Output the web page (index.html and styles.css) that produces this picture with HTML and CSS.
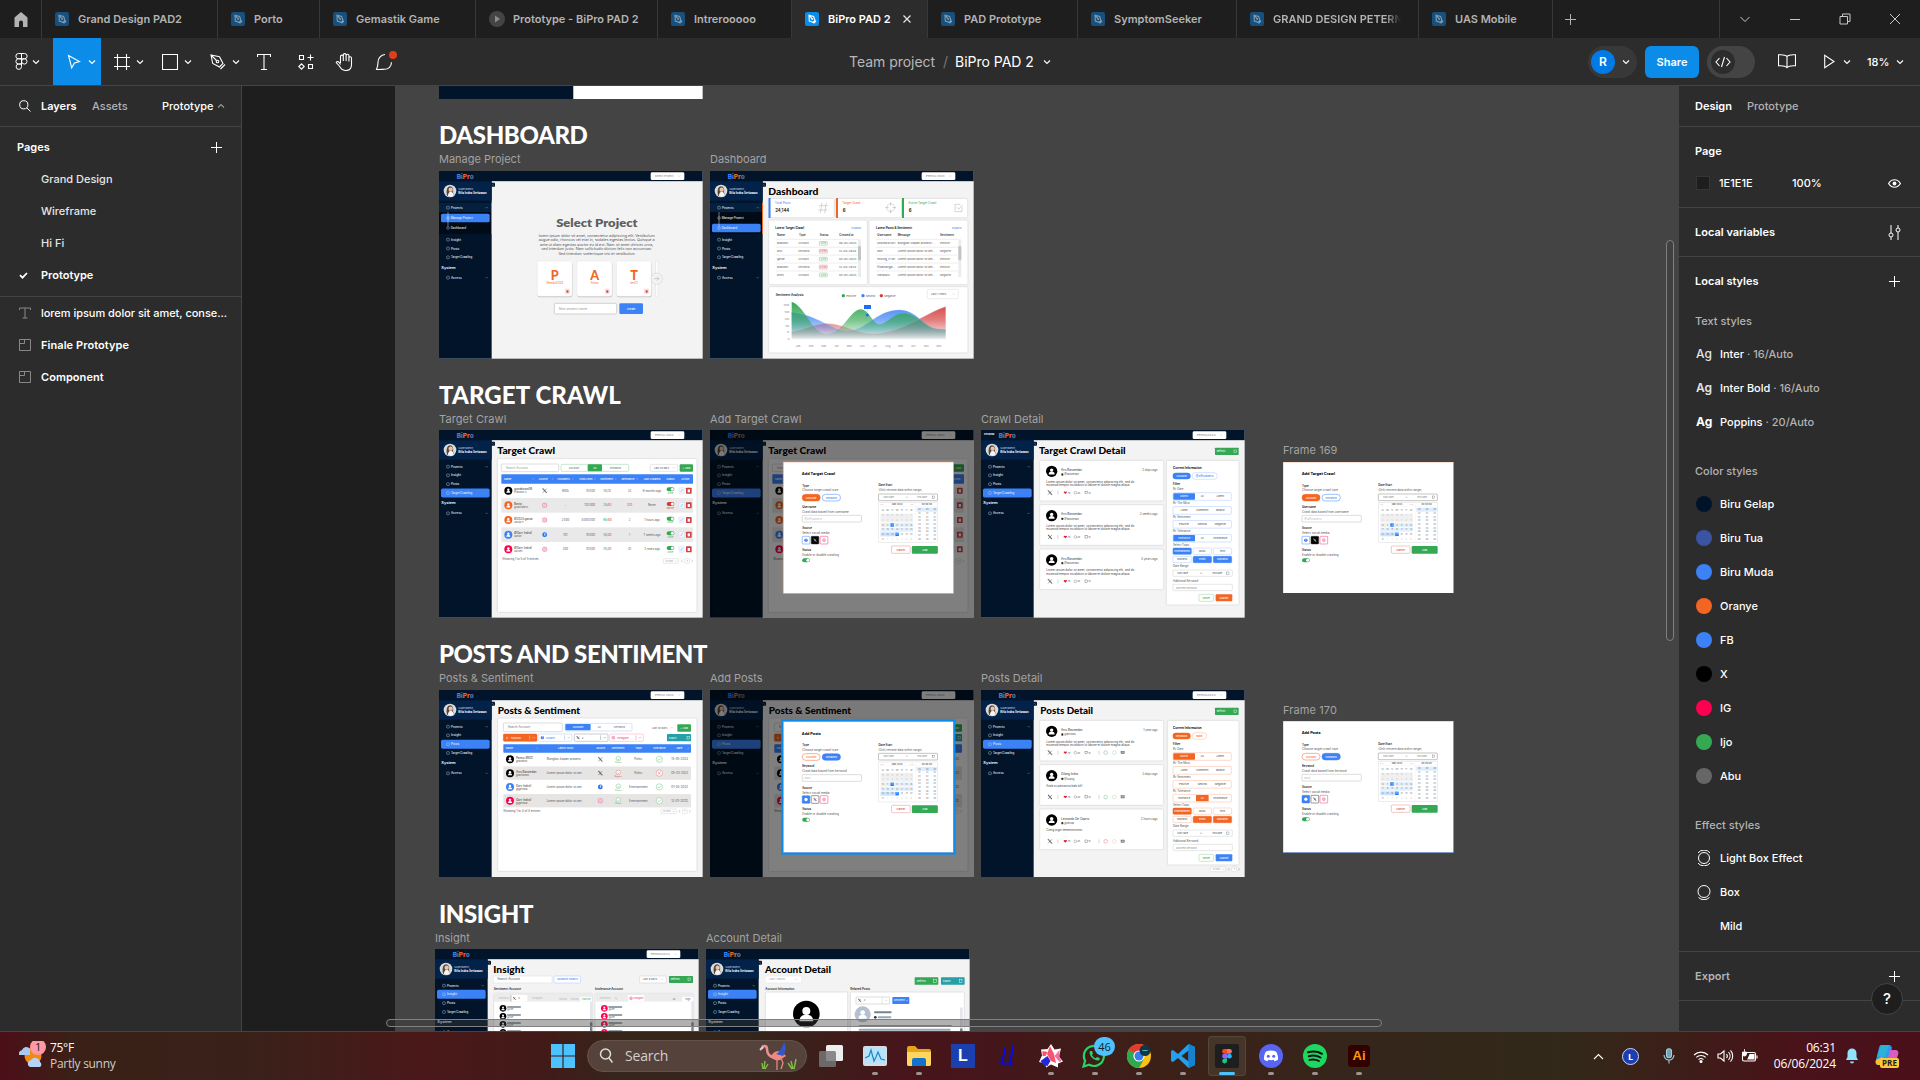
FILE: index.html
```html
<!DOCTYPE html>
<html lang="en">
<head>
<meta charset="utf-8">
<title>BiPro PAD 2</title>
<link rel="stylesheet" href="styles.css">
</head>
<body>
<svg class="defs" width="0" height="0" aria-hidden="true">
  <symbol id="i-file" viewBox="0 0 14 14"><rect width="14" height="14" rx="2" fill="var(--file)"/><path d="M4 3.2l4.6 1.3 1.4 3.8-1.9 2-3.8-1.2zM4 3.2l3 3.4M8.6 11.4l2.4-2.4" fill="none" stroke="var(--nib)" stroke-width="1.1"/><circle cx="7.2" cy="7" r=".9" fill="var(--nib)"/></symbol>
  <symbol id="i-chev" viewBox="0 0 8 8"><path d="M1 2.5l3 3 3-3" fill="none" stroke="currentColor" stroke-width="1.1"/></symbol>
  <symbol id="i-plus" viewBox="0 0 11 11"><path d="M5.500 0v11M0 5.500h11" fill="none" stroke="currentColor"/></symbol>
  <symbol id="i-frame" viewBox="0 0 12 12"><path d="M.5.5h11v11H.5zM.5 4.5h5v-4" fill="none" stroke="currentColor"/></symbol>
</svg>

<header class="tabs">
  <div class="tab home"><svg width="14" height="15" viewBox="0 0 14 15"><path d="M7 0l6.500 5.500V15H9v-4.500a2 2 0 0 0-4 0V15H.5V5.500z" fill="#b3b3b3"/></svg></div>
  <div class="tab w176"><svg class="ic"><use href="#i-file"/></svg><span>Grand Design PAD2</span></div>
  <div class="tab w102"><svg class="ic"><use href="#i-file"/></svg><span>Porto</span></div>
  <div class="tab w156"><svg class="ic"><use href="#i-file"/></svg><span>Gemastik Game</span></div>
  <div class="tab w182"><svg class="play" viewBox="0 0 16 16"><circle cx="8" cy="8" r="8" fill="#444"/><path d="M6 4.500v7l5-3.500z" fill="#8c8c8c"/></svg><span>Prototype - BiPro PAD 2</span></div>
  <div class="tab w134"><svg class="ic"><use href="#i-file"/></svg><span>Intrerooooo</span></div>
  <div class="tab w136 active"><svg class="ic"><use href="#i-file"/></svg><span>BiPro PAD 2</span><svg class="close" viewBox="0 0 8 8"><path d="M.5.500l7 7M7.500.500l-7 7" stroke="#e6e6e6" stroke-width="1.200"/></svg></div>
  <div class="tab w150"><svg class="ic"><use href="#i-file"/></svg><span>PAD Prototype</span></div>
  <div class="tab w159"><svg class="ic"><use href="#i-file"/></svg><span>SymptomSeeker</span></div>
  <div class="tab w182"><svg class="ic"><use href="#i-file"/></svg><span class="fade">GRAND DESIGN PETERN</span></div>
  <div class="tab w134"><svg class="ic"><use href="#i-file"/></svg><span>UAS Mobile</span></div>
  <div class="tab new"><svg width="11" height="11"><use href="#i-plus"/></svg></div>
  <div class="win">
    <svg viewBox="0 0 12 12"><path d="M1.500 4L6 8.500 10.500 4" /></svg>
    <svg viewBox="0 0 12 12"><path d="M1 6.500h10"/></svg>
    <svg viewBox="0 0 12 12"><path d="M1 3.500h7.500V11H1zM3.500 3.500V1H11v7.500H8.500"/></svg>
    <svg viewBox="0 0 12 12"><path d="M1 1l10 10M11 1L1 11"/></svg>
  </div>
</header>

<div class="toolbar">
  <div class="tools">
    <button class="tool t1"><svg width="13" height="17" viewBox="0 0 13 17"><path d="M6.500.5H3.500a2.600 2.600 0 0 0 0 5.300h3zM6.500.5h3a2.600 2.600 0 0 1 0 5.300h-3zM6.500 5.800H3.500a2.600 2.600 0 0 0 0 5.200h3zM6.500 11H3.500a2.700 2.700 0 1 0 3 2.700z"/><circle cx="9.300" cy="8.400" r="2.700"/></svg><svg class="cv"><use href="#i-chev"/></svg></button>
    <button class="tool sel"><svg width="14" height="16" viewBox="0 0 14 16"><path d="M1.500 1.500l11 6-5 1.500-2.800 4.800z"/></svg><svg class="cv"><use href="#i-chev"/></svg></button>
    <button class="tool"><svg width="16" height="16" viewBox="0 0 16 16"><path d="M3.500 0v16M12.500 0v16M0 3.500h16M0 12.500h16"/></svg><svg class="cv"><use href="#i-chev"/></svg></button>
    <button class="tool"><svg width="16" height="16" viewBox="0 0 16 16"><path d="M.5.5h15v15H.5z"/></svg><svg class="cv"><use href="#i-chev"/></svg></button>
    <button class="tool"><svg width="16" height="16" viewBox="0 0 16 16"><path d="M1 1l8.500 1.700 3.500 6.800-3.500 3.500L2.700 9.500zM1 1l6 6M10.500 15l4.500-4.500"/><circle cx="7.500" cy="7.500" r="1.300"/></svg><svg class="cv"><use href="#i-chev"/></svg></button>
    <button class="tool one"><svg width="14" height="16" viewBox="0 0 14 16"><path d="M.5 3V.5h13V3M7 .5v15M4 15.500h6"/></svg></button>
    <button class="tool one parts"><svg width="16" height="16" viewBox="0 0 16 16"><path d="M1.500 1.500h4v4h-4zM10.500 10.500h4v4h-4zM12.500.5v6M9.500 3.500h6M3.500 9.800l2.700 2.700-2.700 2.700L.8 12.500z"/></svg></button>
    <button class="tool one hand"><svg width="19" height="18" viewBox="0 0 19 18"><path d="M5.500 10V3.500a1.400 1.400 0 0 1 2.800 0V8M8.300 8V2a1.400 1.400 0 0 1 2.800 0v6M11.100 8V2.700a1.400 1.400 0 0 1 2.800 0V8.500M13.900 8.500V5a1.300 1.300 0 0 1 2.600 0v6.500c0 4-2.300 6-5.500 6-3.500 0-5-1.500-6.500-4.300L1.200 9.500c.8-1.500 2.500-1 3.200.2L5.500 11.500"/></svg></button>
    <button class="tool one comment"><svg width="18" height="18" viewBox="0 0 18 18"><path d="M10 1.500a7.500 7.500 0 0 0-7 8c0 1.500 0 3-1.500 7 4 .2 6-.2 8-.2 4 0 7-3 7-7"/></svg><i class="dot"></i></button>
  </div>
  <div class="title"><span class="team">Team project</span><span class="slash">/</span><span>BiPro PAD 2</span><svg class="cv"><use href="#i-chev"/></svg></div>
  <div class="actions">
    <div class="user"><b>R</b><svg class="cv"><use href="#i-chev"/></svg></div>
    <button class="share">Share</button>
    <div class="dev"><i><svg width="16" height="12" viewBox="0 0 16 12"><path d="M4.500 2L1 6l3.500 4M11.500 2L15 6l-3.500 4M9.500 1l-3 10"/></svg></i></div>
    <svg class="book" width="18" height="15" viewBox="0 0 18 15"><path d="M9 2.500C7.500.8 4.500.5.5.8v11c4-.3 7 0 8.500 1.900 1.500-1.900 4.500-2.200 8.500-1.900v-11C13.500.5 10.500.8 9 2.500zv11"/></svg>
    <svg class="run" width="11" height="15" viewBox="0 0 11 15"><path d="M.7 1.300v12.400l9.300-6.200z"/></svg><svg class="cv c2"><use href="#i-chev"/></svg>
    <span class="zoom">18%</span><svg class="cv c3"><use href="#i-chev"/></svg>
  </div>
</div>

<main class="work">
  <aside class="left">
    <nav class="ltabs"><svg width="12" height="12" viewBox="0 0 12 12"><circle cx="4.800" cy="4.800" r="4.100"/><path d="M7.800 7.800l3.700 3.700"/></svg><b>Layers</b><span class="dim">Assets</span><span class="pg">Prototype</span><svg class="up" width="8" height="8"><use href="#i-chev"/></svg></nav>
    <section class="pages">
      <div class="row head"><b>Pages</b><svg width="11" height="11"><use href="#i-plus"/></svg></div>
      <div class="row">Grand Design</div>
      <div class="row">Wireframe</div>
      <div class="row">Hi Fi</div>
      <div class="row current"><svg width="9" height="7" viewBox="0 0 9 7"><path d="M1 3.200l2.500 2.500L8 1" stroke-width="1.800"/></svg>Prototype</div>
    </section>
    <section class="layers">
      <div class="row"><svg width="12" height="12" viewBox="0 0 12 12"><path d="M.5 3V1h11v2M6 1v10M3.500 11h5"/></svg>lorem ipsum dolor sit amet, conse...</div>
      <div class="row bold"><svg width="12" height="12"><use href="#i-frame"/></svg>Finale Prototype</div>
      <div class="row bold"><svg width="12" height="12"><use href="#i-frame"/></svg>Component</div>
    </section>
  </aside>

  <div class="canvas" id="canvas">
    <div class="section"></div>
  </div>

  <aside class="right">
    <nav class="rtabs"><b>Design</b><span class="dim">Prototype</span></nav>
    <section class="page">
      <div class="r h34"><b>Page</b></div>
      <div class="r h30"><i class="sq"></i><span class="hex">1E1E1E</span><span>100%</span><svg class="end" width="13" height="9" viewBox="0 0 13 9"><path d="M.6 4.500C3.500-.5 9.500-.5 12.400 4.500 9.500 9.500 3.500 9.500.6 4.500z" stroke-width="1.200"/><circle cx="6.500" cy="4.500" r="1.900" fill="#fff" stroke="none"/></svg></div>
    </section>
    <section class="vars"><div class="r"><b>Local variables</b><svg class="end" width="13" height="15" viewBox="0 0 13 15"><path d="M3 0v8M3 12v3M10 0v3M10 7v8"/><circle cx="3" cy="10" r="2"/><circle cx="10" cy="5" r="2"/></svg></div></section>
    <section class="styles">
      <div class="r h48"><b>Local styles</b><svg class="end plus" width="11" height="11"><use href="#i-plus"/></svg></div>
      <div class="r h32 dim">Text styles</div>
      <div class="r"><em>Ag</em>Inter<span class="dim">&nbsp;· 16/Auto</span></div>
      <div class="r"><em class="sb">Ag</em>Inter Bold<span class="dim">&nbsp;· 16/Auto</span></div>
      <div class="r"><em class="bb">Ag</em>Poppins<span class="dim">&nbsp;· 20/Auto</span></div>
      <div class="r dim gap">Color styles</div>
      <div class="r"><i class="c navy"></i>Biru Gelap</div>
      <div class="r"><i class="c tua"></i>Biru Tua</div>
      <div class="r"><i class="c muda"></i>Biru Muda</div>
      <div class="r"><i class="c oranye"></i>Oranye</div>
      <div class="r"><i class="c fb"></i>FB</div>
      <div class="r"><i class="c black"></i>X</div>
      <div class="r"><i class="c ig"></i>IG</div>
      <div class="r"><i class="c ijo"></i>Ijo</div>
      <div class="r"><i class="c abu"></i>Abu</div>
      <div class="r dim gap">Effect styles</div>
      <div class="r"><svg class="fx" width="16" height="16" viewBox="0 0 16 16"><circle cx="8" cy="8" r="5.500"/><path d="M2 2.800A8 8 0 0 1 14 2.800M2 13.200a8 8 0 0 0 12 0"/></svg>Light Box Effect</div>
      <div class="r"><svg class="fx" width="16" height="16" viewBox="0 0 16 16"><circle cx="8" cy="7.500" r="6"/><path d="M2.500 13.500a8 8 0 0 0 11 0"/></svg>Box</div>
      <div class="r nofx">Mild</div>
    </section>
    <section class="export"><div class="r"><b class="dim">Export</b><svg class="end plus" width="11" height="11"><use href="#i-plus"/></svg></div></section>
    <div class="help">?</div>
  </aside>
</main>

<footer class="taskbar">
  <div class="weather">
    <svg width="30" height="30" viewBox="0 0 30 30"><circle cx="14" cy="15" r="8.500" fill="#f28a12"/><path d="M0 14a4 4 0 0 1 3-5 4.500 4.500 0 0 1 8-1v6z" fill="#a9c8f2"/><path d="M9 24a4 4 0 0 1 3-5 5 5 0 0 1 9 2 3 3 0 0 1 0 5h-9a3 3 0 0 1-3-2z" fill="#b5d3fa"/><circle cx="19" cy="6" r="8" fill="#ff99a4"/><text x="19" y="10" text-anchor="middle" font-size="11" fill="#222">1</text></svg>
    <div><p>75°F</p><p class="sub">Partly sunny</p></div>
  </div>
  <div class="apps">
    <div class="app"><svg width="24" height="24" viewBox="0 0 24 24"><path d="M0 0h11.400v11.400H0zM12.600 0H24v11.400H12.600zM0 12.600h11.400V24H0zM12.600 12.600H24V24H12.600z" fill="#4cc2ff"/></svg></div>
    <div class="search"><svg width="14" height="16" viewBox="0 0 14 16"><circle cx="6.500" cy="6" r="5" fill="none" stroke="#ddd" stroke-width="1.500"/><path d="M10 10l3.500 4.500" stroke="#ddd" stroke-width="1.500"/></svg><span>Search</span>
      <svg width="40" height="28" viewBox="0 0 40 28"><path d="M3 7C3 3 8 3 8 7c0 5 3 8 8 9" fill="none" stroke="#ee8f8f" stroke-width="2.500"/><path d="M1 8l3-3" stroke="#d9c9e8" stroke-width="2"/><path d="M12 14c3-5 7-6 12-3l3 3-6 4c-5 1-8-1-9-4z" fill="#f08a80"/><path d="M17 12c3-1 6-6 8-12 3 4 2 10-1 14z" fill="#3556c8"/><path d="M18 17v11M22 16l2 5-2 6" stroke="#e9887c" stroke-width="1.300" fill="none"/><path d="M4 27l-1-6M5 27l1-8M6 27l3-5M34 27l-2-8M35 27l2-10M33 27l-4-6" stroke="#7dc242" stroke-width="1.400"/></svg></div>
    <div class="app"><svg width="24" height="24" viewBox="0 0 24 24"><rect x="7" y="1" width="17" height="16" rx="1.500" fill="#eee"/><rect x="0" y="7" width="17" height="16" rx="1.500" fill="#777" opacity=".85"/></svg></div>
    <div class="app on"><svg width="24" height="20" viewBox="0 0 24 20"><rect width="24" height="20" rx="2" fill="#d7dde1"/><rect x="1.500" y="1.500" width="21" height="16" fill="#b7e2fa"/><path d="M2 12l4-2 2-6 3 11 2-4 2-5 3 7 4 1" fill="none" stroke="#1689c9" stroke-width="1.200"/></svg></div>
    <div class="app on"><svg width="24" height="22" viewBox="0 0 24 22"><path d="M0 3a2 2 0 0 1 2-2h6l3 3h11a2 2 0 0 1 2 2v13a2 2 0 0 1-2 2H2a2 2 0 0 1-2-2z" fill="#e9a31b"/><path d="M0 7h24v12a2 2 0 0 1-2 2H2a2 2 0 0 1-2-2z" fill="#ffd75e"/><path d="M5 15a2 2 0 0 1 2-2h10a2 2 0 0 1 2 2v6H5z" fill="#1473c8"/></svg></div>
    <div class="app"><div class="lsq">L</div></div>
    <div class="app"><svg width="18" height="22" viewBox="0 0 18 22"><path d="M7 3L4 19M15 0l-3 20" stroke="#0b0bdc" stroke-width="2.200"/><path d="M0 17h12M4 20h11" stroke="#0b0bdc"/></svg></div>
    <div class="app on"><svg width="24" height="24" viewBox="0 0 24 24"><path d="M12 0l3.500 5.500L22 4.500l-2 8 4 5-5 2 0 4-7-3-5 3-.5-4L0 18l3-6.500-1-6L8.500 5z" fill="#fff"/><path d="M11 2l4 8 2 9-5-2-4-7z" fill="#f8536b"/><path d="M1.500 17l7-5 3 5-3 5-4-1z" fill="#2528d8"/><path d="M20.500 6l-5 6 5 6 2-1-2-4z" fill="#f36fa0"/><path d="M3.500 7l5 1-2 4-3 0z" fill="#f8536b"/></svg></div>
    <div class="app on wa"><svg width="26" height="24" viewBox="0 0 26 24"><path d="M1.500 22.500l1.600-5.800a10 10 0 1 1 4 4z" fill="none" stroke="#25d366" stroke-width="2.200"/><path d="M8 7c-2 4 4 10 8.500 9.500 1.500-.5 1.500-2 1-2.500l-2.500-1-1.500 1.300c-1.500-.6-2.800-1.800-3.500-3.300L11 9.500 10 7z" fill="#25d366"/></svg><b>46</b></div>
    <div class="app on"><svg width="24" height="24" viewBox="0 0 24 24"><circle cx="12" cy="12" r="12" fill="#fbc116"/><path d="M12 12L1.600 6A12 12 0 0 1 22.400 6z" fill="#e33b2e"/><path d="M1.600 6A12 12 0 0 0 12 24l5-9-5-3z" fill="#2da94f"/><path d="M12 12L1.600 6l5 9z" fill="#2da94f"/><circle cx="12" cy="12" r="5.600" fill="#fff"/><circle cx="12" cy="12" r="4.500" fill="#3a7df0"/><circle cx="18" cy="6.500" r="5.500" fill="#123646"/><path d="M15.500 6.500h5" stroke="#57b7c9"/></svg></div>
    <div class="app on"><svg width="24" height="24" viewBox="0 0 24 24"><path d="M17.500 0L24 3v18l-6.500 3L7 14l-5 4-2-1V7l2-1 5 4zM17.500 6.500L10.500 12l7 5.500z" fill="#23a0ee" fill-rule="evenodd"/><path d="M17.500 0L24 3v18l-6.500 3z" fill="#1583cf"/></svg></div>
    <div class="app cur"><svg width="24" height="24" viewBox="0 0 24 24"><rect width="24" height="24" rx="2" fill="#1e1e1e"/><path d="M12 5H9.500a2.400 2.400 0 0 0 0 4.800H12z" fill="#f24e1e"/><path d="M12 5h2.500a2.400 2.400 0 0 1 0 4.800H12z" fill="#ff7262"/><path d="M12 9.800H9.500a2.400 2.400 0 0 0 0 4.800H12z" fill="#a259ff"/><circle cx="14.400" cy="12.200" r="2.400" fill="#1abcfe"/><path d="M12 14.600H9.500a2.400 2.400 0 1 0 2.500 2.400z" fill="#0acf83"/></svg></div>
    <div class="app on"><svg width="24" height="24" viewBox="0 0 24 24"><circle cx="12" cy="12" r="12" fill="#5865f2"/><path d="M7 7.500c3-1.300 7-1.300 10 0 1.500 2.500 2.300 5 2 8-1.200 1-2.300 1.400-3.500 1.700l-.8-1.400a9 9 0 0 1-5.400 0l-.8 1.400C7.300 16.900 6.200 16.500 5 15.500c-.3-3 .5-5.500 2-8z" fill="#fff"/><circle cx="9.300" cy="12.300" r="1.500" fill="#5865f2"/><circle cx="14.700" cy="12.300" r="1.500" fill="#5865f2"/></svg></div>
    <div class="app on"><svg width="24" height="24" viewBox="0 0 24 24"><circle cx="12" cy="12" r="12" fill="#1ed760"/><path d="M5 8.300c5-1.400 10-.9 14 1.500M5.800 12.200c4.200-1.200 8.300-.7 11.700 1.300M6.500 15.900c3.400-.9 6.700-.5 9.400 1.100" fill="none" stroke="#111" stroke-width="2" stroke-linecap="round"/></svg></div>
    <div class="app on"><div class="ai">Ai</div></div>
  </div>
  <div class="tray">
    <svg class="k1" width="11" height="7" viewBox="0 0 11 7"><path d="M1 6l4.500-4.500L10 6"/></svg>
    <span class="lc">L</span>
    <svg class="k2" width="12" height="16" viewBox="0 0 12 16"><rect x="3.500" y=".7" width="5" height="9" rx="2.500" fill="#6fa3b5" stroke="#9fd3e2"/><path d="M1 7a5 5 0 0 0 10 0M6 12v3.500" stroke="#9fd3e2"/></svg>
    <svg class="k3" width="16" height="13" viewBox="0 0 16 13"><path d="M1 5a10 10 0 0 1 14 0M3.300 7.400a6.700 6.700 0 0 1 9.400 0M5.600 9.600a3.500 3.500 0 0 1 4.800 0"/><circle cx="8" cy="11.500" r="1" fill="#fff"/></svg>
    <svg class="k4" width="17" height="14" viewBox="0 0 17 14"><path d="M1 5h2.500L7 2v10L3.500 9H1zM9.500 5a3 3 0 0 1 0 4M11.500 3a6 6 0 0 1 0 8M13.500 1.300a8.500 8.500 0 0 1 0 11.400"/></svg>
    <svg class="k5" width="17" height="14" viewBox="0 0 17 14"><rect x="1.500" y="3.500" width="13" height="8.500" rx="1.500"/><path d="M16 6.500v3"/><path d="M9 5.500h4V10H7z" fill="#fff"/><path d="M3.500 0v3M1.500 3h4v2a2 2 0 0 1-4 0z" fill="#fff" stroke-width=".8"/></svg>
    <div class="clock"><p>06:31</p><p>06/06/2024</p></div>
    <svg class="k6" width="14" height="16" viewBox="0 0 14 16"><path d="M7 .5A4.500 4.500 0 0 1 11.500 5v4l1.500 3H1l1.500-3V5A4.500 4.500 0 0 1 7 .5zM5 13.500h4a2 2 0 0 1-4 0z" fill="#8fe3fb" stroke="none"/></svg>
    <svg class="k7" width="25" height="24" viewBox="0 0 25 24"><path d="M6 1h8c2 0 2.500 1.500 3 3l-5 14c-.7 2-1.500 3-4 3H4c-3 0-4-2-3-5L4 4c.5-2 1-3 2-3z" fill="#2a9df0" stroke="none"/><path d="M2 12l4-11h8l-4 12z" fill="#31c0c6" stroke="none" opacity=".6"/><path d="M1 16l6-3 3 6-3 2H4c-3 0-4-2-3-5z" fill="#f3c22b" stroke="none"/><path d="M15 6h5c3 0 4 2 3 5l-3 9c-.6 1-1 1-3 1h-6z" fill="#d45fc0" stroke="none"/><rect x="5" y="14" width="19" height="10" rx="2" fill="#ffc83d" stroke="none"/><text x="14.500" y="22" text-anchor="middle" font-size="8" font-weight="700" fill="#222" stroke="none">PRE</text></svg>
  </div>
</footer>
<script src="artboards.js"></script>
</body>
</html>
```
FILE: styles.css
```css
* { box-sizing: border-box; }
html, body { margin: 0; height: 100%; overflow: hidden; }
body {
  display: flex; flex-direction: column; width: 1920px; height: 1080px;
  background: #2c2c2c; color: #fff; font: 500 11px/16px Inter, "Liberation Sans", sans-serif;
}
p { margin: 0; }
svg { display: block; flex: none; }
.defs { position: absolute; }
button { border: 0; background: none; color: inherit; font: inherit; padding: 0; }
.dim { color: #b3b3b3; }
b { font-weight: 600; }

/* file tabs */
.tabs { display: flex; height: 38px; flex: none; background: #1e1e1e; }
.tab {
  --file: #17507c; --nib: #7f9db3;
  display: flex; align-items: center; gap: 9px; padding-left: 13px;
  border-right: 1px solid #383838; color: #b3b3b3; white-space: nowrap; overflow: hidden; font-weight: 600;
}
.tab .ic { width: 14px; height: 14px; }
.tab .play { width: 16px; height: 16px; margin-right: -1px; }
.home { width: 42px; padding-left: 14px; }
.w102 { width: 102px; } .w134 { width: 134px; } .w136 { width: 136px; } .w150 { width: 150px; }
.w156 { width: 156px; } .w159 { width: 159px; } .w176 { width: 176px; } .w182 { width: 182px; }
.tab.active { --file: #0c8ce9; --nib: #fff; background: #2c2c2c; color: #fff; }
.close { width: 8px; height: 8px; margin-left: 3px; }
.fade { width: 128px; overflow: hidden; mask-image: linear-gradient(90deg, #000 88%, transparent); }
.new { width: 167px; padding-left: 12px; }
.win { display: flex; flex: 1; align-items: center; padding-left: 19px; gap: 38px; }
.win svg { width: 12px; height: 12px; fill: none; stroke: #c8c8c8; }

/* toolbar */
.toolbar { display: flex; height: 48px; flex: none; border-bottom: 1px solid #444; position: relative; }
.toolbar svg { fill: none; stroke: #fff; stroke-width: 1.1; }
.cv { width: 8px; height: 8px; }
.tools { display: flex; }
.tool { display: flex; align-items: center; width: 48px; gap: 8px; padding-left: 14px; }
.t1 { width: 53px; padding-left: 15px; gap: 4px; }
.t1 svg:first-child { stroke-width: 1; }
.sel { background: #0c8ce9; gap: 7px; }
.sel ~ .tool:not(.one) { padding-left: 13px; gap: 6px; }
.one { width: 41px; padding-left: 12px; }
.hand { padding-left: 8px; }
.comment { position: relative; padding-left: 7px; }
.dot { position: absolute; left: 21px; top: 13px; width: 8px; height: 8px; border-radius: 50%; background: #e03e1a; }
.title { position: absolute; left: 849px; top: 14px; display: flex; align-items: center; font-size: 14px; line-height: 20px; font-weight: 400; white-space: nowrap; letter-spacing: -.03px; }
.team { color: #b8b8b8; }
.slash { color: #777; padding: 0 7px 0 8px; }
.title .cv { margin-left: 9px; }
.actions { display: flex; align-items: center; margin-left: auto; padding-right: 16px; }
.user { display: flex; align-items: center; gap: 7px; width: 49px; height: 32px; border-radius: 16px; background: #383838; padding-left: 3px; }
.user b { width: 24px; height: 24px; border-radius: 50%; background: #007be5; text-align: center; line-height: 24px; font-size: 12px; }
.share { width: 54px; height: 32px; margin-left: 8px; border-radius: 6px; background: #0c8ce9; font-weight: 600; }
.dev { width: 48px; height: 32px; margin-left: 8px; padding: 4px; border-radius: 16px; background: #444; }
.dev i { display: flex; align-items: center; justify-content: center; width: 24px; height: 24px; border-radius: 50%; background: #2c2c2c; }
.book { margin-left: 23px; }
.run { margin-left: 28px; }
.c2 { margin-left: 8px; }
.zoom { margin-left: 16px; width: 24px; }
.c3 { margin-left: 5px; }

/* work area */
.work { display: flex; height: 946px; flex: none; border-bottom: 1px solid #444; }
.left { width: 242px; flex: none; border-right: 1px solid #444; }
.left svg { fill: none; stroke: #fff; }
.ltabs { display: flex; align-items: center; height: 41px; padding-left: 19px; border-bottom: 1px solid #444; }
.ltabs b { margin-left: 10px; width: 51px; }
.ltabs .dim { width: 70px; }
.ltabs .pg { width: 55px; }
.up { transform: rotate(180deg); color: #999; }
.pages { height: 170px; padding-top: 4px; border-bottom: 1px solid #444; }
.row { display: flex; align-items: center; height: 32px; padding-left: 41px; color: #e5e5e5; white-space: nowrap; }
.row.head { padding: 0 19px 0 17px; justify-content: space-between; color: #fff; }
.row.current { padding-left: 19px; font-weight: 600; color: #fff; }
.current svg { margin-right: 13px; }
.layers .row { padding-left: 19px; color: #fff; }
.layers .row:first-child { letter-spacing: -.03px; }
.layers svg { margin-right: 10px; stroke: #888; color: #888; }
.layers .bold { font-weight: 600; letter-spacing: .07px; }

.canvas { position: relative; flex: 1; overflow: hidden; background: #1e1e1e; }
.section { position: absolute; left: 153px; top: 0; right: 0; bottom: 0; background: #444; }
.canvas > svg { position: absolute; }
.canvas text { font-family: Inter, "Liberation Sans", sans-serif; white-space: pre; }
.canvas text.poster { font-family: Lato, Inter, sans-serif; }
.heading { position: absolute; white-space: nowrap; font: 900 24px/30px Lato, Inter, sans-serif; }
.label { position: absolute; white-space: nowrap; font: 400 11px/14px Inter, sans-serif; color: #a3a3a3; }
.vbar, .hbar { position: absolute; border: 1px solid #808080; border-radius: 4px; background: rgba(60, 60, 60, .4); }
.vbar { right: 5px; top: 154px; width: 8px; height: 401px; }
.hbar { left: 144px; top: 933px; width: 996px; height: 8px; }

.right { position: relative; width: 241px; flex: none; }
.right svg { fill: none; stroke: #fff; }
.right section { border-bottom: 1px solid #444; padding: 0 19px 0 16px; }
.rtabs { display: flex; align-items: center; height: 41px; padding-left: 16px; gap: 15px; border-bottom: 1px solid #444; }
.right .r { display: flex; align-items: center; height: 34px; white-space: nowrap; }
.right .h30 { height: 30px; }
.right .h32 { height: 32px; }
.right .h48 { height: 48px; }
.right .end { margin-left: auto; }
.right .plus { margin-right: 1px; }
.page { height: 81px; }
.right .page { padding-top: 7px; }
.sq { width: 14px; height: 14px; margin: 0 9px 0 1px; background: #1e1e1e; border: 1px solid #353535; }
.hex { width: 73px; }
.right .vars { height: 49px; padding-top: 7px; }
.styles { height: 695px; }
.right em { width: 17px; margin: 0 7px 0 1px; font: 500 12px/16px Inter, sans-serif; color: #e5e5e5; }
.right .sb { font-weight: 600; }
.right .bb { font-weight: 700; color: #fff; }
.right .gap { height: 48px; padding-top: 16px; }
.c { width: 16px; height: 16px; margin: 0 8px 0 1px; border-radius: 50%; }
.navy { background: #001329; } .tua { background: #3a54a4; } .muda { background: #3b82f6; } .oranye { background: #f26522; }
.fb { background: #3b82f6; } .black { background: #000; } .ig { background: #ff0050; } .ijo { background: #34a853; } .abu { background: #666; }
.fx { margin: 0 8px 0 1px; }
.nofx { padding-left: 25px; }
.right .export { height: 49px; padding-top: 7px; }
.help { position: absolute; left: 192px; bottom: 16px; width: 32px; height: 32px; border: 1px solid #444; border-radius: 50%; background: #1e1e1e; text-align: center; font-size: 15px; line-height: 30px; }

/* taskbar */
.taskbar {
  display: flex; align-items: center; height: 48px; flex: none;
  font: 400 12px/16px "Open Sans", "Noto Sans", sans-serif;
  background: linear-gradient(90deg, #4c0f19 0, #3a2016 70px, #39211a 250px, #4a1818 420px, #421a18 540px, #35251a 620px, #34241a 760px, #47151b 900px, #44161a 1000px, #3c2018 1150px, #35251a 1350px, #32291a 1560px, #3c1e18 1680px, #4a1219 1800px, #49101a 1920px);
}
.weather { display: flex; align-items: center; width: 541px; padding-left: 19px; gap: 1px; letter-spacing: -.3px; }
.sub { color: #ccc; }
.apps { display: flex; align-items: center; }
.app { position: relative; display: flex; align-items: center; justify-content: center; width: 44px; height: 48px; }
.app.on::after, .app.cur::after { content: ""; position: absolute; bottom: 5px; left: 19px; width: 6px; height: 3px; border-radius: 2px; background: #9e9294; }
.app.cur { box-shadow: inset 0 0 0 1px #54463c; background: #453528; width: 38px; height: 40px; margin: 0 3px; border-radius: 4px; }
.app.cur::after { bottom: 1px; left: 11px; width: 16px; background: #4cc2ff; }
.search { display: flex; align-items: center; width: 220px; height: 32px; margin: 0 2px; padding-left: 11px; border: 1px solid #65534b; border-radius: 16px; background: #55423a; font-size: 14px; color: #d5cfcc; letter-spacing: -.2px; }
.search span { margin: 0 auto 0 12px; }
.search > svg:last-child { margin-right: 7px; }
.lsq { width: 24px; height: 24px; background: #1b3fae; font: 700 16px/24px "Liberation Sans", sans-serif; text-align: center; }
.ai { width: 22px; height: 22px; border-radius: 4px; background: #330000; color: #ff9a00; font: 700 13px/22px "Liberation Sans", sans-serif; text-align: center; }
.wa b { position: absolute; left: 21px; top: 5px; width: 21px; height: 19px; border-radius: 10px; background: #4cc2ff; color: #123; font-size: 11px; font-weight: 400; line-height: 19px; text-align: center; }
.tray { display: flex; align-items: center; margin-left: auto; padding-right: 20px; }
.tray svg { fill: none; stroke: #fff; stroke-width: 1.1; }
.lc { width: 17px; height: 17px; margin: 0 24px 0 18px; border: 1px solid #c9d6f7; border-radius: 50%; background: #1b3fae; font-size: 9px; line-height: 15px; text-align: center; font-weight: 700; }
.k3 { margin-left: 18px; }
.k4 { margin-left: 8px; }
.k5 { margin-left: 7px; }
.clock { width: 78px; text-align: right; letter-spacing: -.15px; }
.k6 { margin: 0 16px 0 9px; }
```
FILE: artboards.js
```js
// Artboards are drawn in a 791 x 562.5 unit space, three units to a canvas pixel.
const BLUE = '#3b82f6', ORANGE = '#f26522', GREEN = '#34a853', RED = '#d43c3c', PINK = '#ff2d70', NAVY = '#011429', TEAL = '#26a0a8', GRAY = '#777';
const R = (x, y, w, h, fill = '#fff', o = {}) =>
  `<rect x="${x}" y="${y}" width="${w}" height="${h}" fill="${fill}" rx="${o.r || 0}" ${o.s ? `stroke="${o.s}" stroke-width="${o.sw || 1.5}"` : ''} ${o.o ? `opacity="${o.o}"` : ''}/>`;
// y is the vertical middle of the text; w fixes the drawn width
const T = (x, y, s, size = 8.5, o = {}) =>
  `<text x="${x}" y="${(y + size * 0.36).toFixed(1)}" font-size="${size}" fill="${o.c || '#555'}" font-weight="${o.b || 400}" text-anchor="${o.a || 'start'}" ${o.cls ? `class="${o.cls}"` : ''} ${o.w ? `textLength="${o.w}" lengthAdjust="spacingAndGlyphs"` : ''}>${s}</text>`;
const M = (x, y, s, size, o = {}) => T(x, y, s, size, { ...o, a: 'middle' });
const C = (x, y, r, fill, s = 'none') => `<circle cx="${x}" cy="${y}" r="${r}" fill="${fill}" stroke="${s}"/>`;
const P = (d, s = '#999', w = 1.5, fill = 'none') => `<path d="${d}" stroke="${s}" stroke-width="${w}" fill="${fill}"/>`;
const card = (x, y, w, h) => R(x, y, w, h, '#fff', { r: 3, s: '#dedede', sw: 2.5 });
const btn = (x, y, w, h, label, fill, o = {}) => R(x, y, w, h, fill, { r: o.r ?? 3, s: o.s }) + M(x + w / 2, y + h / 2, label, o.size || 8, { c: o.c || '#fff', b: 500 });
const chev = (x, y, c = '#aaa') => P(`M${x - 3} ${y - 1.5}l3 3 3-3`, c, 1.2);
const person = (x, y, r, fill) => C(x, y, r, fill) + C(x, y - r * .22, r * .3, '#fff') + P(`M${x - r * .52} ${y + r * .55}q0-${r * .5} ${r * .52}-${r * .5}t${r * .52} ${r * .5}z`, 'none', 0, '#fff');
const xIcon = (x, y, s = 6, c = '#222') => P(`M${x - s} ${y - s}l${2 * s} ${2 * s}M${x + s} ${y - s}l-${2 * s} ${2 * s}`, c, s * .2) + P(`M${x - s} ${y - s}h${s * .5}l${s * 1.5} ${2 * s}h-${s * .5}z`, c, 1);
const igIcon = (x, y, s = 6) => R(x - s, y - s, 2 * s, 2 * s, '#fbe3ef', { r: 3, s: '#e0528c' }) + C(x, y, s * .45, 'none', '#f07c50');
const fbIcon = (x, y, r = 7) => C(x, y, r, '#1f6ff0') + M(x, y + .5, 'f', r * 1.5, { c: '#fff', b: 700 });
const toggle = (x, y, c) => R(x, y, 23, 12, c, { r: 6 }) + C(x + 17, y + 6, 4.500, '#fff');

function shell(active, o = {}) {
  let s = R(0, 0, 791, 563, '#f3f3f3') + R(0, 0, 158, 563, NAVY) + R(0, 0, 791, 30.500, NAVY) + R(0, 31, 158, 58, '#03224a');
  s += `<text x="53" y="23" font-size="19" font-weight="800" textLength="51" lengthAdjust="spacingAndGlyphs"><tspan fill="${BLUE}">Bi</tspan><tspan fill="${ORANGE}">Pr</tspan><tspan fill="#5a74ad">o</tspan></text>`;
  if (o.select) s += R(635, 4, 101, 23, '#fff', { r: 4 }) + T(647, 16, o.select, 8, { c: '#888', w: 57 }) + chev(721, 15);
  if (o.note) s += T(9, 11, o.note, 7.500, { c: '#fff', b: 600, w: 31 });
  s += C(33, 60, 19, '#d9dcd9') + P('M24 74q-5-26 9-28q12 2 9 18l3 11q-12 7-21-1z', 'none', 0, '#584539') + C(35, 56, 6.500, '#e8c5ad') + P('M26 76q2-14 9-14t10 13q-9 6-19 1z', 'none', 0, '#f5f5f5');
  s += T(58, 53, 'Superadmin,', 8, { c: '#cdd6e2', w: 46 }) + T(58, 65, 'Rifa Indra Setiawan', 8.500, { c: '#fff', b: 700, w: 85 });
  const item = (y, label, w, on) => (on ? R(6, y - 13.500, 146, 27, BLUE, { r: 5 }) : '') + R(23, y - 4, 8, 8, 'none', { s: '#cfd8e6', sw: 1.300, r: 2 }) + T(36, y, label, 8.500, { c: '#e8edf5', w, b: 500 });
  let y = 110;
  if (o.open) {
    s += R(0, 96, 158, 27, '#04203f') + R(0, 123, 158, 66, '#010b18') + R(156, 96, 3, 93, ORANGE);
    for (const [yy, label, w] of [[141, 'Manage Project', 66], [171, 'Dashboard', 46]])
      s += (active === label ? R(6, yy - 13, 146, 26, BLUE, { r: 5 }) : '') + C(27, yy, 4, 'none', '#fff') + T(35, yy, label, 8.500, { c: '#fff', w });
    s += P('M27 123v44', '#fff', 1.300);
  }
  s += item(y, 'Projects', 35) + chev(143, y, '#bbb');
  y = o.open ? 206 : 136;
  [['Insight', 30], ['Posts', 25], ['Target Crawling', 64]].forEach(([l, w], i) => { s += item(y + i * 26.500, l, w, active === l); });
  s += T(7, y + 83, 'System', 10, { c: '#fff', b: 600, w: 43 }) + item(y + 114, 'Access', 32) + chev(143, y + 114, '#bbb');
  s += R(157, 35, 11, 12, NAVY, { r: 2 }) + P('M164 38l-3 3 3 3', '#fff', 1);
  if (o.title) s += T(o.tx || 175, 61, o.title, 27, { c: '#000', b: 900, w: o.tw, cls: 'poster' });
  return s;
}

function manageProject() {
  let s = shell('Manage Project', { open: true, select: 'Select Project' });
  s += M(473.500, 155.500, 'Select Project', 36, { c: '#5f5f5f', b: 800, w: 244, cls: 'poster' });
  [['lorem ipsum dolor sit amet, consectetur adipiscing elit. Vestibulum', 348], ['augue odio, rhoncus vel erat in, sodales egestas lectus. Quisque a', 348], ['ante ut diam egestas auctor eu id est. Nam sit amet ultrices urna,', 340], ['sed interdum justo. Nam sollicitudin dictum felis non accumsan.', 332], ['Sed interdum scelerisque nisi et vestibulum', 229]]
    .forEach(([l, w], i) => { s += M(473, 194 + i * 13.200, l, 10.500, { c: '#555', w }); });
  [['P', 'Pemilu2024', 294.500], ['A', 'Aslos', 414], ['T', 'tes01', 532]].forEach(([l, n, x]) => {
    s += R(x + 1, 273, 105, 106, '#c4c4c4', { r: 7 }) + R(x, 270, 105, 106, '#fff', { r: 7, s: '#e2e2e2', sw: 1 }) + M(x + 53, 314, l, 38, { c: ORANGE, b: 900, cls: 'poster' }) + M(x + 53, 337, n, 9, { c: ORANGE }) + R(x + 85, 354, 12, 14, '#fdeaea', { s: '#eebcbc', sw: 1 }) + R(x + 88, 358, 6, 7, RED);
  });
  s += R(650, 270, 7, 106, '#fff', { r: 3, s: '#ddd' }) + C(653, 323, 17, '#f3f3f3', '#b9b9b9') + P('M645 323h15M654 317l6 6-6 6', '#b9b9b9', 2);
  s += R(346, 397, 187, 32, '#fff', { r: 4, s: '#bbb', sw: 2 }) + T(359, 413, 'New project name', 8.500, { c: '#999', w: 86 }) + btn(541, 397, 71, 32, 'Create', BLUE, { r: 4 });
  return s;
}

function dashboard() {
  let s = shell('Dashboard', { open: true, select: 'Pemilu 2024', title: 'Dashboard', tw: 150 });
  [[175.600, BLUE, 'Total Posts', 47, '24,144'], [378, ORANGE, 'Target Crawl', 54, '6'], [576, GREEN, 'Active Target Crawl', 84, '6']].forEach(([x, c, l, w, v]) => {
    s += card(x, 82, 197, 58) + R(x, 81, 6, 60, c) + T(x + 19, 97, l, 9, { c, w }) + T(x + 20, 117, v, 13, { c: '#111', b: 600 });
  });
  s += P('M336 95l-5 31M349 95l-5 31M327 104h27M325 117h27', '#ccc', 2.500) + C(542, 110, 12, 'none', '#aaa') + P('M542 94v10M542 116v10M526 110h10M548 110h10', '#aaa', 2) + P('M756 108v14h-21v-22h16M740 109l6 6 12-14', '#ccc', 2.500);
  s += card(176, 147, 296, 194) + card(477, 147, 297, 194) + card(176, 347, 598, 199);
  s += T(196, 171, 'Latest Target Crawl', 8.500, { c: '#111', b: 700, w: 86 }) + T(453, 171, 'Expand', 8, { c: BLUE, a: 'end' }) + T(498, 171, 'Latest Posts &amp; Sentiment', 8.500, { c: '#111', b: 700, w: 108 }) + T(754, 171, 'Expand', 8, { c: BLUE, a: 'end' });
  [[201, 'Name'], [267, 'Type'], [329, 'Status'], [388, 'Created at'], [502, 'Username'], [563, 'Message'], [690, 'Sentiment']].forEach(([x, l]) => { s += T(x, 193, l, 8.500, { c: '#333', b: 600 }); });
  const rows = [['prabowo', 'Account', 1, '05-04-2024', 'jokowicuri', 'Bongkar-kapan prasejo ...', 'Positive'], ['anis', 'Keyword', 0, '12-04-2024', 'adin', 'Lorem ipsum dolor sit am...', 'Negative'], ['ganjar', 'Account', 1, '03-04-2024', 'miking_11 dri', 'Lorem ipsum dolor sit am...', 'Positive'], ['prabowo', 'Keyword', 0, '12-04-2024', 'fitjanarga...', 'Lorem ipsum dolor sit am...', 'Positive'], ['anies', 'Account', 1, '03-04-2024', 'handback', 'Lorem ipsum dolor sit am...', 'Negative']];
  rows.forEach((r, i) => {
    const y = 217 + i * 23.700, c = r[2] ? GREEN : RED;
    s += T(201, y, r[0], 8) + T(265, y, r[1], 8) + R(328, y - 5.500, 24, 11, '#fff', { r: 2, s: c, sw: 1 }) + M(340, y, r[2] ? 'Active' : 'Closed', 6, { c }) + T(387, y, r[3], 8, { w: 52 });
    s += T(502, y, r[4], 8, { w: r[4].length > 9 ? 54 : 0 }) + T(563, y, r[5], 8, { w: 112 }) + T(690, y, r[6], 8);
    s += P(`M196 ${y - 12}h248M498 ${y - 12}h246`, '#ddd', 1.500);
  });
  for (const x of [444, 745]) s += R(x, 205, 9, 113, '#ececec') + R(x, 225, 9, 43, '#c4c4c4', { r: 3 });
  s += T(197, 373, 'Sentiment Analysis', 8.500, { c: '#111', b: 600, w: 83 });
  [[400, GREEN, 'Positive'], [459, BLUE, 'Neutral'], [514, RED, 'Negative']].forEach(([x, c, l]) => { s += C(x, 374, 5, c) + T(x + 9, 374, l, 8); });
  s += R(652, 355, 93, 28, '#fff', { r: 3, s: '#ddd' }) + T(663, 370, 'Last 7 years', 8) + chev(731, 369);
  const line = {
    r: ['M245 484C290 474 315 458 350 458C400 458 440 490 490 490C570 488 640 430 707 407', RED],
    b: ['M245 423C320 432 370 481 413 481C465 481 500 417 567 417C625 417 640 475 690 475L707 476', BLUE],
    g: ['M245 392C290 410 305 489 350 489C400 489 420 415 453 415C475 415 490 460 508 460C530 460 550 427 579 427C625 427 645 475 690 475L707 476', GREEN] };
  for (const k in line) s += `<linearGradient id="grad-${k}" x1="0" y1="392" x2="0" y2="505" gradientUnits="userSpaceOnUse"><stop offset="0" stop-color="${line[k][1]}"/><stop offset=".5" stop-color="${line[k][1]}" stop-opacity=".65"/><stop offset="1" stop-color="${line[k][1]}" stop-opacity=".03"/></linearGradient>`;
  s += P(line.r[0] + 'V505H245z', 'none', 0, 'url(#grad-r)') + P(line.b[0] + 'V505H245z', 'none', 0, 'url(#grad-b)') + P(line.g[0] + 'V505H245z', 'none', 0, 'url(#grad-g)') + P(line.r[0], '#e08a8a', 1) + P(line.b[0], '#7aa9f5', 1);
  s += P('M472 414v18', '#8ab0f8', 1) + R(462, 402, 21, 12, '#1f6ff5') + C(472, 432, 4.500, '#1f6ff5');
  ['100k', '50k', '20k', '10k', '1k', '0'].forEach((l, i) => { s += T(238, 402 + i * 20.600, l, 8, { a: 'end', c: '#888' }); });
  ['Jan', 'Feb', 'Mar', 'Apr', 'May', 'Jun', 'Jul', 'Aug', 'Sep', 'Oct', 'Nov', 'Dec'].forEach((l, i) => { s += M(264.500 + i * 38.400, 526, l, 8, { c: '#888' }); });
  return s;
}

function targetCrawl() {
  let s = shell('Target Crawling', { select: 'Pemilu 2024', title: 'Target Crawl', tw: 173 }) + card(175, 86, 599, 461);
  s += R(187, 102, 172, 23, '#fff', { r: 3, s: '#bbb' }) + T(200, 114, 'Search Account', 8.500, { c: '#999', w: 67 });
  s += R(366, 103, 203, 21, '#fff', { r: 3, s: '#8fd0a3' }) + M(405, 114, 'Account', 8) + btn(446, 103, 43, 21, 'All', GREEN) + M(529, 114, 'Keyword', 8);
  s += R(634, 103, 82, 21, '#fff', { r: 3, s: '#ccc' }) + T(645, 114, 'Last 30 days', 7.500) + chev(704, 113) + btn(722, 103, 40, 22, '+ Add', GREEN);
  s += R(187, 133, 575, 28, BLUE, { r: 2 }) + T(195, 147, 'Name', 8, { c: '#fff', b: 500 });
  [['Source', 313], ['Followers', 374], ['Total Likes', 440], ['Sentiment', 503], ['Relevance', 567], ['Last Crawled', 639], ['Status', 694], ['Action', 739]].forEach(([l, x], i) => { s += M(x, 147, l, 8, { c: '#fff', b: 500 }); if (i < 5) s += P(`M${x + 26} 150l3-6`, '#bcd4fb', 1); });
  s += P('M281 150l4-6', '#bcd4fb', 1);
  const rows = [['@prabowo08', 'Prabowo S', '#000', 'x', '900k', '10.000', ['50', '12'], '24', '6 months ago', 1], ['Batita', '@batitafans', ORANGE, 'i', '-', '120.000', ['24', '83'], '203', 'Never', 0], ['@2024.ganjar', 'Ganjar P', ORANGE, 'i', '2.000', '4.000.000', ['90', '40'], '2', '1 hours ago', 1], ['@Gary Indra1', 'Ganjar', BLUE, 'f', '101', '10.000', ['50', '20'], '1', '7 weeks ago', 1], ['@Gary Indra1', 'Garden', '#ff0050', 'i', '200', '10.000', ['70', '20'], '20', '3 years ago', 1]];
  rows.forEach((r, i) => {
    const y = 182 + i * 44;
    if (i % 2) s += R(187, y - 22, 575, 44, '#e9e9e9');
    s += person(208, y, 12, r[2]) + T(225, y - 4, r[0], 8.500, { c: '#333' }) + T(225, y + 5, r[1], 7.500, { c: '#666' });
    s += r[3] === 'x' ? xIcon(317, y) : r[3] === 'i' ? igIcon(317, y) : fbIcon(317, y);
    s += M(379, y, r[4], 8.500) + T(468, y, r[5], 8.500, { a: 'end' }) + `<text x="505" y="${y + 3}" font-size="8.500" text-anchor="middle"><tspan fill="${GREEN}">${r[6][0]}</tspan><tspan fill="#777">/</tspan><tspan fill="${RED}">${r[6][1]}</tspan></text>` + M(572, y, r[7], 8.500, { c: RED }) + M(639, y, r[8], 8.500);
    s += toggle(683, y - 10, r[9] ? GREEN : RED) + M(694, y + 8, r[9] ? 'Active' : 'Inactive', 6, { c: r[9] ? GREEN : RED });
    s += R(720, y - 9, 16, 18, '#f2f7ff', { r: 2, s: '#b9d3fb', sw: 1 }) + P(`M725 ${y + 4}l6-8`, BLUE, 1.300) + R(741, y - 9, 17, 18, '#d63f3f', { r: 2 }) + R(746, y - 4, 7, 9, '#fff');
  });
  s += T(190, 388, 'Showing 1 to 5 of 5 entries', 8.500, { w: 109 }) + pager(673, 393);
  return s;
}
const pager = (x, y) => R(x, y - 7, 46, 14, '#fff', { r: 3, s: '#bbb', sw: 1 }) + T(x + 6, y, '10 rows', 6.500, { c: '#999' }) + chev(x + 39, y) + P(`M${x + 57} ${y - 4}l-3 4 3 4M${x + 85} ${y - 4}l3 4-3 4`, '#777', 1) + R(x + 64, y - 7, 15, 14, '#fff', { r: 3, s: '#bbb', sw: 1 }) + M(x + 71.500, y, '1', 7);

function modal(posts) {
  let s = R(0, 0, 511, 394, '#fff', { s: posts ? '#7fa6ea' : '#e8a27f', sw: 2 });
  const h = (x, y, l) => T(x, y, l, 8.500, { c: '#111', b: 600 });
  s += T(56, 36, posts ? 'Add Posts' : 'Add Target Crawl', 11, { c: '#000', b: 700, w: posts ? 57 : 100 });
  s += h(57, 71, 'Type') + T(57, 85, 'Choose target crawl type', 8.500, { w: 108 });
  s += btn(57, 97, 54, 20, 'Account', posts ? '#fff' : ORANGE, { r: 10, s: ORANGE, c: posts ? ORANGE : '#fff' }) + btn(117, 97, 55, 20, 'Keyword', posts ? BLUE : '#fff', { r: 10, s: BLUE, c: posts ? '#fff' : BLUE });
  s += h(57, 135, posts ? 'Keyword' : 'Username') + T(57, 150, posts ? 'Crawl data based from keyword' : 'Crawl data based from username', 8.500, { w: posts ? 134 : 140 }) + R(57, 160, 178, 20, '#fff', { r: 2, s: '#bbb' }) + T(64, 170, posts ? 'Batik' : '@Officialkeris', 8, { c: '#bbb' });
  s += h(57, 199, 'Source') + T(57, 214, 'Select social media', 8.500, { w: 82 });
  s += R(57, 223, 23, 23, posts ? BLUE : '#fff', { r: 2, s: BLUE }) + (posts ? C(68.500, 234.500, 5, '#fff') : fbIcon(68.500, 234.500, 5)) + R(84, 223, 23, 23, posts ? '#fff' : '#000', { r: 2, s: '#333' }) + xIcon(95.500, 234.500, 4, posts ? '#222' : '#fff') + R(111, 223, 23, 23, '#fff', { r: 2, s: PINK }) + igIcon(122.500, 234.500, 4);
  s += h(57, 263, 'Status') + T(57, 278, 'Enable or disable crawling', 8.500, { w: 110 }) + toggle(57, 289, GREEN);
  s += h(286, 70, 'Date Start') + T(286, 85, '(Only retrieve data within range)', 8.500, { w: 130 });
  s += R(286, 96, 177, 20, '#fff', { r: 2, s: '#888' }) + M(316, 106, 'Start date', 7, { c: '#888' }) + M(370, 106, '→', 7, { c: '#888' }) + M(417, 106, 'End date', 7, { c: '#888' }) + R(448, 102, 6, 7, '#fff', { s: '#555', sw: 1 });
  s += R(286, 122, 177, 120, '#fff', { s: '#ddd' }) + P('M397 122v120M286 133h177', '#eee', 1) + T(292, 128, '‹ ‹', 7) + M(342, 128, 'Mar 2024', 7, { c: '#333' }) + T(382, 128, '› ›', 7) + M(431, 128, '00:00:00', 7, { c: '#333' });
  s += R(292, 155, 98, 26, '#f0f0f0') + R(292, 183, 28, 12, '#f0f0f0') + R(321, 183, 69, 12, '#e3f0fc') + R(292, 197, 98, 12, '#e3f0fc') + R(292, 211, 50, 12, '#cde3fb') + R(400, 137, 62, 12, '#dcecfc') + R(322, 184, 10, 10, '#1677ff') + R(337, 212, 10, 10, '#1677ff');
  ['Su', 'Mo', 'Tu', 'We', 'Th', 'Fr', 'Sa'].forEach((d, i) => { s += M(299 + i * 14.200, 146, d, 5.500, { c: '#777' }); });
  for (let r = 0; r < 6; r++) for (let c = 0; c < 7; c++) {
    const n = r * 7 + c - 4, day = n < 1 ? n + 29 : n > 31 ? n - 31 : n, on = (r === 2 && c === 2) || (r === 4 && c === 3);
    s += M(+(299 + c * 14.200).toFixed(1), 161 + r * 14, day, 5.500, { c: on ? '#fff' : r < 2 || n > 31 ? '#bbb' : '#777' });
  }
  for (let r = 0; r < 9; r++) for (let c = 0; c < 3; c++) s += M(409 + c * 23, 143 + r * 11, '0' + r, 6, { c: '#777' });
  s += btn(325, 252, 56, 22, 'Cancel', '#fff', { s: '#e98b8b', c: RED }) + btn(386, 252, 78, 23, 'Add', GREEN);
  return s;
}

function withModal(base, posts) {
  let s = base + R(0, 0, 791, 563, '#000', { o: .5 }) + `<g transform="translate(219.600 ${posts ? 94 : 96})">${modal(posts)}</g>`;
  if (posts) s += R(216.500, 91, 517, 400, 'none', { s: '#0c8ce9', sw: 6 });
  return s;
}

function sentimentFace(x, y, c) { return C(x, y - 2, 7, '#fff', c) + P(`M${x - 3} ${y - 1}q3 4 6 0`, c, 1.300) + M(x, y + 9, c === RED ? 'Negative' : 'Positive', 5, { c }); }
function postsPage() {
  let s = shell('Posts', { select: 'Pemilu 2024', title: 'Posts &amp; Sentiment', tw: 247, tx: 176 }) + card(176, 84, 598, 460);
  s += R(193, 99, 177, 26, '#fff', { r: 3, s: '#bbb' }) + T(206, 112, 'Search Account', 8.500, { c: '#777', w: 68 });
  s += R(378, 100, 201, 23, '#fff', { r: 3, s: '#a9c8fa' }) + btn(379, 102, 76, 19, 'Account', BLUE) + M(481, 112, 'All', 8) + M(541, 112, 'Keyword', 8);
  s += T(639, 114, 'Last 30 days', 8, { w: 46 }) + chev(698, 113) + btn(715, 103, 41, 22, '+ Add', GREEN);
  [[193, ORANGE, ORANGE, 'Typhoon', '#fff'], [298, '#fff', '#a9c8fa', 'Awqatin', BLUE], [406, '#fff', '#999', 'X', '#555'], [512, '#fff', '#f9a3bf', 'Instagram', PINK]].forEach(([x, f, st, l, c], i) => {
    s += R(x, 132, 101, 22, f, { r: 3, s: st }) + T(x + 22, 143, l, 7.500, { c }) + P(`M${x + 79} 136v14`, c, 1) + chev(x + 91, 143, c);
    s += [person(x + 11, 143, 5, ORANGE), fbIcon(x + 12, 143, 5), xIcon(x + 11, 143, 4), igIcon(x + 11, 143, 4)][i];
  });
  s += R(684, 132, 72, 22, TEAL, { r: 2 }) + T(690, 143, 'Export', 7.500, { c: '#fff' }) + R(744, 139, 7, 8, 'none', { s: '#fff', sw: 1.300 });
  s += R(193, 163, 563, 25, BLUE, { r: 2 }) + T(200, 175, 'Name', 8, { c: '#fff', b: 500 });
  [['Latest Posts', 380], ['Source', 485], ['Sentiment', 537], ['Topic', 599], ['Tolerance', 661], ['Date', 721]].forEach(([l, x]) => { s += M(x, 175, l, 8, { c: '#fff', b: 500 }); });
  s += P('M292 178l4-6M746 178l4-6', '#bcd4fb', 1);
  [['Pamuji BNG1', '@rakbhoir', '#000', 'x', 'Bongkar-kapan prasejo ...', 1, 'Politic', '15-05-2024'], ['Anis Baswedan', '@anisbswd', '#000', 'x', 'Lorem ipsum dolor sit am...', 0, 'Politic', '05-03-2023'], ['Gary Indra1', '@garindra', BLUE, 'f', 'Lorem ipsum dolor sit am...', 1, 'Entertainment', '01-04-2022'], ['Gary Indra1', '@garindra', '#ff0050', 'i', 'Lorem ipsum dolor sit am...', 1, 'Entertainment', '12-01-2032']].forEach((r, i) => {
    const y = 208 + i * 41.400, c = r[5] ? GREEN : RED;
    if (i % 2) s += R(193, y - 20, 563, 40, '#e7e5e4');
    s += person(213, y, 12, r[2]) + T(231, y - 3, r[0], 8.500, { c: '#333' }) + T(231, y + 6, r[1], 7, { c: '#555' });
    s += M(379, y, r[4], 8.500, { w: 112 }) + (r[3] === 'x' ? xIcon(484, y) : r[3] === 'i' ? igIcon(484, y) : fbIcon(484, y)) + sentimentFace(538, y, c);
    s += M(598, y, r[6], 8.500) + C(661, y, 9.500, '#fff', c) + P(r[5] ? `M656 ${y}l4 3 6-6` : `M657 ${y - 4}l8 8M665 ${y - 4}l-8 8`, c, 1.300) + M(722, y, r[7], 8.500, { w: 50 });
  });
  s += T(193, 362, 'Showing 1 to 4 of 4 entries', 8.500, { w: 111 }) + pager(666, 364);
  return s;
}

function detail(posts) {
  const A = posts ? ORANGE : BLUE, L = posts ? '#f9b798' : '#a9c8fa';
  let s = shell(posts ? 'Posts' : 'Target Crawling', { select: 'Pemilu2024', note: posts ? '' : 'Beranda', title: posts ? 'Posts Detail' : 'Target Crawl Detail', tx: posts ? 178 : 174, tw: posts ? 158 : 260 });
  s += R(702, 53, 71, 22, GREEN, { r: 2 }) + T(707, 64, 'Refresh', 7, { c: '#fff' }) + R(759, 60, 7, 7, 'none', { s: '#fff', sw: 1.300 });
  const lorem = ['Lorem ipsum dolor sit amet, consectetur adipiscing elit, sed do', 'eiusmod tempor incididunt ut labore et dolore magna aliqua.'];
  const data = posts ? [['Anis Baswedan', '@anisbas', '1 year ago', lorem], ['Gilang Indra', '@Gilang', '3 days ago', ['Anda itu pantasnya babi loh!']], ['Leonardo De Caprio', '@decap', '2 hours ago', ['Coeg jogin temennnnnnn']]]
    : [['Aris Baswedan', '@Baswedan', '2 days ago', lorem], ['Aris Baswedan', '@Baswedan', '3 weeks ago', lorem], ['Aris Baswedan', '@Baswedan', '4 years ago', lorem]];
  data.forEach((d, i) => {
    const y = 91 + i * 133;
    s += card(176, y, 372, 122) + person(212, y + 33, 17, '#000') + T(240, y + 29, d[0], 9, { c: '#333' }) + R(241, y + 39, 6, 7, '#333', { r: 2 }) + T(250, y + 42.500, d[1], 7.500) + T(530, y + 29, d[2], 9, { a: 'end' });
    d[3].forEach((l, k) => { s += T(196, y + 64 + k * 9.500, l, 8.500, { c: '#444', w: d[3].length > 1 ? 264 - k * 12 : 108 }); });
    s += xIcon(207, y + 97, 6) + P(`M231 ${y + 91}v12`, '#888', 1) + P(`M253 ${y + 101}l-5-5q0-4 5-2q5-2 5 2z`, 'none', 0, '#e11d2a') + T(260, y + 97, '7k', 7.500) + C(283, y + 97, 4, 'none', '#555') + T(289, y + 97, '2k', 7.500) + R(312, y + 93, 8, 7, 'none', { s: '#555', sw: 1.200 }) + T(322, y + 97, '1k', 7.500);
    if (posts) s += P(`M354 ${y + 91}v12`, '#888', 1) + C(374, y + 97, 5.500, '#fff', [GRAY, GREEN, RED][i]) + C(400, y + 97, 5.500, '#fff', ['#7cc894', '#7cc894', '#eda0a0'][i]) + R(420, y + 93, 10, 7, '#aaa', { s: '#444', sw: 1.200 });
  });
  const x0 = posts ? 559 : 556;
  s += card(x0, 91, 774 - x0, 434) + T(576, 114, 'Current Information', 9, { c: '#111', b: 700, w: 86 });
  s += btn(575, 128, 54, 20, posts ? 'Keyword' : 'Account', A, { r: 10 }) + btn(633, 128, posts ? 44 : 76, 20, posts ? 'Batik' : '@Officialkeris', '#fff', { r: 10, s: L, c: A });
  s += T(576, 163, 'Filter', 8.500, { c: '#111', b: 700 });
  [['By Date', ['Oldest', 'All', 'Latest'], 0], ['By The Most', ['Liked', 'Comment', 'Repost'], -1], ['By Sentiment', ['Positive', 'Neutral', 'Negative'], -1], ['By Tolerance', ['Tolerance', 'All', 'Intolerance'], posts ? 1 : 0]].forEach(([h, o, on], i) => {
    const y = 188 + i * 41.700;
    s += T(576, y - 10, h, 8.500) + R(576, y, 175, 23, '#fff', { r: 3, s: L });
    if (on === 0) s += R(577, y + 2, 65, 19, A, { r: 2 });
    if (on === 1) s += R(645, y + 2, 38, 19, A, { r: 2 });
    o.forEach((l, k) => { s += M([609, 664, 718][k], y + 11.500, l, 8, { c: on === k ? '#fff' : '#444' }); });
  });
  s += T(576, 344, 'Select Topic', 8.500);
  ['Entertainment', 'Music', 'Tech', 'Business', 'Politic', 'Operation'].forEach((l, i) => {
    const on = [0, 4, 5].includes(i), x = 576 + (i % 3) * 60.500, y = i < 3 ? 354 : 379;
    s += btn(x, y, 55, 19, l, on ? A : '#fff', { s: on ? A : L, c: on ? '#fff' : '#555', size: 7 });
  });
  s += T(576, 409, 'Date Range', 8.500) + R(576, 420, 178, 19, '#fff', { r: 2, s: '#ccc' }) + M(605, 430, 'Start date', 7) + M(660, 430, '→', 7) + M(709, 430, 'End date', 7) + R(737, 426, 7, 7, '#fff', { s: '#666', sw: 1 });
  s += T(576, 453, 'Additional Keyword', 8.500, { w: 76 }) + R(576, 463, 178, 19, '#fff', { r: 2, s: '#ccc' }) + T(584, 473, 'Add new keyword', 7.500, { c: '#888' });
  s += btn(654, 493, 44, 21, 'Reset', '#fff', { s: '#8fd0a3', c: GREEN }) + btn(704, 493, 50, 21, 'Submit', posts ? BLUE : ORANGE);
  if (posts) s += pager(688, 538);
  return s;
}

function insight() {
  let s = shell('Insight', { select: 'Pemilu2024', title: 'Insight', tw: 93 });
  s += R(175, 81, 176, 21, '#fff', { r: 2, s: '#ddd' }) + T(187, 91, 'Search Account', 8.500, { w: 68 }) + btn(357, 81, 80, 21, 'Advance Search', '#fff', { s: '#a9c8fa', c: BLUE });
  s += R(614, 81, 80, 21, '#fff', { r: 2, s: '#ccc' }) + T(623, 91, 'Last 9 days', 8) + chev(681, 91) + R(702, 81, 72, 21, GREEN, { r: 2 }) + T(707, 91, 'Refresh', 7.500, { c: '#fff' }) + R(759, 87, 8, 8, 'none', { s: '#fff', sw: 1.300 });
  s += T(176, 120, 'Sentiment Account', 8.500, { c: '#222', b: 600, w: 82 }) + T(480, 120, 'Intolerance Account', 8.500, { c: '#222', b: 600, w: 84 });
  s += card(176, 133, 296, 400) + card(480, 133, 296, 400) + R(177, 134, 294, 24, '#ececec') + R(481, 134, 294, 24, '#ececec');
  s += R(228, 138, 49, 20) + P('M228 138v20', '#555', 1) + xIcon(238, 148, 3.500) + T(250, 148, 'X', 7) + T(190, 148, 'Facebook', 7, { c: '#bbb' }) + T(290, 148, 'Instagram', 7, { c: '#bbb' }) + T(372, 152, 'Neutral', 7, { c: '#bbb' }) + T(407, 152, 'Neutral', 7, { c: '#bbb' }) + R(436, 144, 35, 14) + T(441, 152, 'Positive', 7, { c: GREEN });
  s += T(494, 148, 'Facebook', 7, { c: '#bbb' }) + xIcon(543, 148, 3, '#bbb') + R(579, 138, 49, 20) + igIcon(588, 148, 4) + T(595, 148, 'Instagram', 6.500, { c: PINK }) + T(713, 152, 'All', 7) + R(741, 144, 34, 14) + T(751, 152, 'High', 7);
  for (let i = 0; i < 4; i++) for (const [x, c] of [[204, '#000'], [508, '#ff0050']])
    s += person(x, 178 + i * 24, 10, c) + R(x + 12, 172 + i * 24, 42, 4, '#75828f', { r: 2 }) + T(x + 13, 182 + i * 24, '@user', 6, { c: '#555' });
  for (const x of [465, 769]) s += R(x, 158, 7, 120, '#e3e6ea') + R(x, 220, 7, 40, '#75828f', { r: 3 });
  return s;
}

function accountDetail() {
  let s = shell('Insight', { title: 'Account Detail', tw: 198, tx: 177 });
  s += R(178, 81, 109, 21, '#fff', { r: 2, s: '#e4e4e4' }) + T(190, 91, 'Last 1 month', 8, { c: '#999' }) + chev(271, 91);
  s += R(626, 85, 71, 22, GREEN, { r: 2 }) + T(632, 96, 'Refresh', 7.500, { c: '#fff' }) + R(683, 92, 8, 8, 'none', { s: '#fff', sw: 1.300 }) + R(705, 85, 71, 22, TEAL, { r: 2 }) + T(711, 96, 'Export', 7.500, { c: '#fff' }) + R(760, 92, 8, 8, 'none', { s: '#fff', sw: 1.300 });
  s += T(178, 120, 'Account Information', 8.500, { c: '#222', b: 600, w: 87 }) + T(433, 120, 'Related Posts', 8.500, { c: '#222', b: 600, w: 59 }) + card(178, 129, 247, 420) + card(433, 129, 342, 420);
  s += person(301, 195, 40, '#000') + R(450, 144, 101, 21, '#fff', { r: 2, s: '#bbb' }) + xIcon(461, 154, 4) + T(473, 154, 'X', 7.500) + P('M529 144v21', '#bbb', 1) + chev(541, 154) + R(559, 144, 51, 21, BLUE, { r: 2 }) + T(563, 154, 'Sentiment', 7, { c: '#fff' }) + chev(603, 154, '#fff');
  s += person(470, 196, 24, '#b4c0cd') + R(504, 187, 53, 6, '#75828f', { r: 3 }) + C(508, 205, 4, '#333') + R(515, 202, 41, 6, '#9aa7b4', { r: 3 }) + R(458, 228, 280, 6, '#9aa7b4', { r: 3 }) + R(458, 239, 276, 6, '#9aa7b4', { r: 3 }) + R(762, 175, 8, 75, '#e3e6ea', { r: 4 }) + R(762, 238, 8, 30, '#75828f', { r: 4 });
  return s;
}

// x / y are canvas pixels
const boards = [
  [197, 85, 791, 562.500, manageProject()], [468, 85, 791, 562.500, dashboard()],
  [197, 344.200, 791, 562.500, targetCrawl()], [468, 344.200, 791, 562.500, withModal(targetCrawl(), false)], [739.400, 344.200, 791, 562.500, detail(false)], [1041.300, 375.700, 511, 394, modal(false)],
  [197, 603.800, 791, 562.500, postsPage()], [468, 603.800, 791, 562.500, withModal(postsPage(), true)], [739.400, 603.800, 791, 562.500, detail(true)], [1041.300, 635.300, 511, 394, modal(true)],
  [193.200, 863.300, 791, 562.500, insight()], [464.200, 863.300, 791, 562.500, accountDetail()],
  [197, -174.500, 791, 562.500, R(0, 0, 403, 563, NAVY) + R(403, 0, 388, 563)]
];
const headings = [[197, 34, 'DASHBOARD', 148.5], [197, 293.500, 'TARGET CRAWL', 182], [197, 553, 'POSTS AND SENTIMENT', 268], [197, 812.500, 'INSIGHT', 94]];
const labels = [[197, 66, 'Manage Project', 81.5], [468, 66, 'Dashboard', 56.5], [197, 326, 'Target Crawl', 67.5], [468, 326, 'Add Target Crawl', 91.5], [739, 326, 'Crawl Detail', 62.5], [1041, 357, 'Frame 169', 54.5], [197, 585, 'Posts &amp; Sentiment', 94.5], [468, 585, 'Add Posts', 52.5], [739, 585, 'Posts Detail', 61.5], [1041, 617, 'Frame 170', 54], [193, 845, 'Insight', 35], [464, 845, 'Account Detail', 76]];

document.getElementById('canvas').insertAdjacentHTML('beforeend',
  boards.map(([x, y, w, h, body]) => `<svg style="left:${x}px;top:${y}px" width="${w / 3}" height="${h / 3}" viewBox="0 0 ${w} ${h}">${body}</svg>`).join('') +
  headings.map(([x, y, s]) => `<div class="heading" style="left:${x}px;top:${y}px">${s}</div>`).join('') +
  labels.map(([x, y, s]) => `<div class="label" style="left:${x}px;top:${y}px">${s}</div>`).join('') +
  '<div class="vbar"></div><div class="hbar"></div>');
// spread each caption to its drawn width
document.querySelectorAll('.heading, .label').forEach((el, i) => {
  const [, , s, w] = [...headings, ...labels][i];
  el.style.letterSpacing = (w - el.getBoundingClientRect().width) / el.textContent.length + 'px';
});
```
